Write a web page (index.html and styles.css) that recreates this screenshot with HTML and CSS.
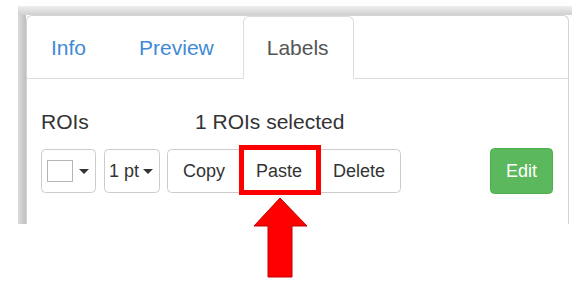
FILE: index.html
```html
<!DOCTYPE html>
<html>
<head>
<meta charset="utf-8">
<link rel="stylesheet" href="styles.css">
</head>
<body>
<div class="frame">
  <div class="panel">
    <ul class="tabs">
      <li class="tab">Info</li>
      <li class="tab">Preview</li>
      <li class="tab active">Labels</li>
    </ul>
    <div class="pane">
      <div class="heading">
        <span class="title">ROIs</span>
        <span class="count">1 ROIs selected</span>
      </div>
      <div class="toolbar">
        <button class="btn color-btn"><span class="swatch"></span><span class="caret"></span></button>
        <button class="btn size-btn">1 pt<span class="caret"></span></button>
        <div class="btn-group">
          <button class="btn">Copy</button>
          <button class="btn highlight">Paste</button>
          <button class="btn">Delete</button>
        </div>
        <button class="btn btn-success">Edit</button>
      </div>
    </div>
  </div>
</div>
<svg class="arrow" width="56" height="82" viewBox="0 0 56 82">
  <polygon points="27,1 54,29 39,29 39,80 15,80 15,29 1,29" fill="#ff0000" stroke="#c00000" stroke-width="1"/>
</svg>
</body>
</html>
```
FILE: styles.css
```css
html, body {
  margin: 0;
  padding: 0;
  background: #fff;
}
body {
  font-family: "Liberation Sans", Arial, sans-serif;
  color: #333;
  width: 582px;
  height: 290px;
  overflow: hidden;
}
.frame {
  margin: 6px 0 0 18px;
  width: 554px;
  height: 218px;
  padding: 9px 0 0 8px;
  box-sizing: border-box;
  background:
    linear-gradient(#eeeeee, #d0d0d0) top left / 100% 9px no-repeat,
    linear-gradient(to right, #dcdcdc, #bfbfbf) top left / 8px 100% no-repeat;
}
.panel {
  width: 543px;
  height: 100%;
  box-sizing: border-box;
  background: #fff;
  border: 1px solid #d4d4d4;
  border-bottom: none;
  border-radius: 6px 6px 0 0;
}
.tabs {
  list-style: none;
  margin: 0;
  padding: 0;
  display: flex;
  border-bottom: 1px solid #ddd;
}
.tab {
  font-size: 21px;
  line-height: 30px;
  padding: 16px 24px 15px 23px;
  border: 1px solid transparent;
  border-radius: 6px 6px 0 0;
  margin-right: 4px;
  margin-bottom: -1px;
  color: #3f8ad6;
}
.tab.active {
  color: #555;
  background: #fff;
  border-color: #ddd;
  border-bottom-color: transparent;
}
.pane {
  padding: 0 15px 0 14px;
}
.heading {
  margin-top: 28px;
  display: flex;
  font-size: 21px;
  line-height: 30px;
  color: #333;
}
.title {
  width: 154px;
}
.toolbar {
  margin-top: 12px;
  display: flex;
  align-items: flex-start;
}
.btn {
  font-family: "Liberation Sans", Arial, sans-serif;
  font-size: 18px;
  line-height: 27px;
  padding: 7.5px 15px;
  margin: 0;
  color: #333;
  background: #fff;
  border: 1px solid #ccc;
  border-radius: 4.5px;
  box-sizing: border-box;
  height: 44px;
  display: flex;
  align-items: center;
}
.caret {
  display: inline-block;
  width: 0;
  height: 0;
  border-top: 5px solid #333;
  border-left: 5px solid transparent;
  border-right: 5px solid transparent;
}
.color-btn {
  padding: 0 6px 0 5px;
}
.swatch {
  width: 26px;
  height: 22px;
  box-sizing: border-box;
  border: 1px solid #b5b5b5;
  background: #fff;
  margin-right: 6px;
}
.size-btn {
  margin-left: 8px;
  padding: 0 6px 0 4px;
}
.size-btn .caret {
  margin-left: 4px;
}
.btn-group {
  display: flex;
  margin-left: 7px;
}
.btn-group .btn {
  border-radius: 0;
}
.btn-group .btn + .btn {
  margin-left: -1px;
}
.btn-group .btn:first-child {
  border-radius: 4.5px 0 0 4.5px;
}
.btn-group .btn:last-child {
  border-radius: 0 4.5px 4.5px 0;
}
.highlight {
  position: relative;
}
.highlight::after {
  content: "";
  position: absolute;
  top: -5px;
  left: -2px;
  right: -4px;
  bottom: -3px;
  border: 5px solid #ff0000;
  z-index: 2;
}
.btn-success {
  margin-left: auto;
  color: #fff;
  background: #5cb85c;
  border-color: #4cae4c;
  margin-top: -1px;
  height: 46px;
}
.arrow {
  position: absolute;
  left: 253px;
  top: 197px;
}
```
